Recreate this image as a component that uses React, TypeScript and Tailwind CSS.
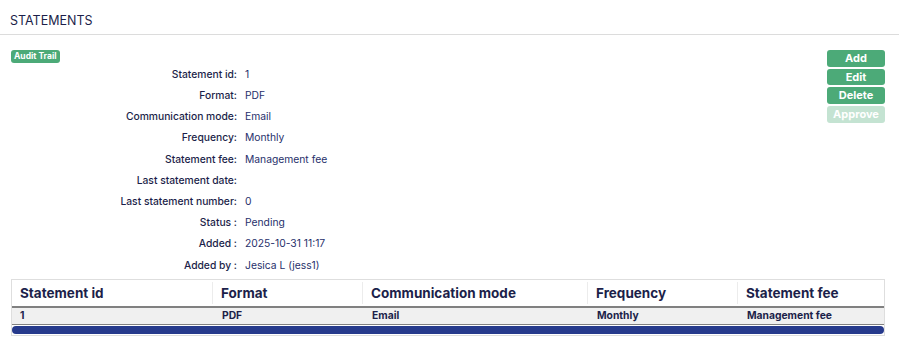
const fields: [string, string][] = [
  ['Statement id:', '1'],
  ['Format:', 'PDF'],
  ['Communication mode:', 'Email'],
  ['Frequency:', 'Monthly'],
  ['Statement fee:', 'Management fee'],
  ['Last statement date:', ''],
  ['Last statement number:', '0'],
  ['Status :', 'Pending'],
  ['Added :', '2025-10-31 11:17'],
  ['Added by :', 'Jesica L (jess1)'],
];

const columns = [
  { title: 'Statement id', value: '1', w: 'w-[201px]' },
  { title: 'Format', value: 'PDF', w: 'w-[150px]' },
  { title: 'Communication mode', value: 'Email', w: 'w-[225px]' },
  { title: 'Frequency', value: 'Monthly', w: 'w-[150px]' },
  { title: 'Statement fee', value: 'Management fee', w: 'flex-1' },
];

const buttons = [
  { label: 'Add', disabled: false },
  { label: 'Edit', disabled: false },
  { label: 'Delete', disabled: false },
  { label: 'Approve', disabled: true },
];

export default function App() {
  return (
    <div className="w-[899px] h-[348px] bg-white text-[#1c1f4a] font-['Inter',sans-serif]">
      <div className="h-[35px] border-b border-[#dcdcdc] px-[10px] pt-[13px] text-[12.5px] leading-[16px] text-[#1c1f4a]">
        STATEMENTS
      </div>

      <div className="flex pl-[11px] pr-[14px] pt-[15px]">
        <div className="flex-1">
          <div className="h-[13px] w-fit rounded-[3px] bg-[#4caa78] px-[3px] text-[8.5px] font-bold leading-[13px] text-white">
            Audit Trail
          </div>
          <div className="flex flex-col pt-[1px]">
            {fields.map(([label, value]) => (
              <div key={label} className="flex h-[21.2px] items-center text-[10.3px]">
                <div className="w-[226px] text-right font-medium text-[#1c1f4a]">{label}</div>
                <div className="pl-[8px] text-[#27306b]">{value}</div>
              </div>
            ))}
          </div>
        </div>
        <div className="flex w-[58px] flex-col gap-[2px]">
          {buttons.map((b) => (
            <div
              key={b.label}
              className={
                b.disabled
                  ? 'h-[16.7px] rounded-[3px] bg-[#c4e3d2] text-center text-[11px] font-bold leading-[16.7px] text-white'
                  : 'h-[16.7px] rounded-[3px] bg-[#4caa78] text-center text-[11px] font-bold leading-[16.7px] text-white'
              }
            >
              {b.label}
            </div>
          ))}
        </div>
      </div>

      <div className="mx-[11px] mt-[3px] w-[874px] border border-[#dedede]">
        <div className="flex h-[28px] items-center border-b-2 border-[#808080]">
          {columns.map((c, i) => (
            <div
              key={c.title}
              className={`${c.w} flex h-[22px] items-center px-[8px] text-[13.5px] font-bold text-[#1c1f4a] ${i < columns.length - 1 ? 'border-r border-[#ececec]' : ''}`}
            >
              {c.title}
            </div>
          ))}
        </div>
        <div className="flex h-[17px] items-center border-b border-[#808080] bg-[#f0f0f0]">
          {columns.map((c, i) => (
            <div
              key={c.title}
              className={`${c.w} px-[8px] text-[10.3px] font-bold text-[#1c1f4a] ${i === 0 ? '' : 'pl-[9px]'}`}
            >
              {c.value}
            </div>
          ))}
        </div>
        <div className="my-[1px] h-[8px] rounded-full bg-[#263a8c]" />
      </div>
    </div>
  );
}
